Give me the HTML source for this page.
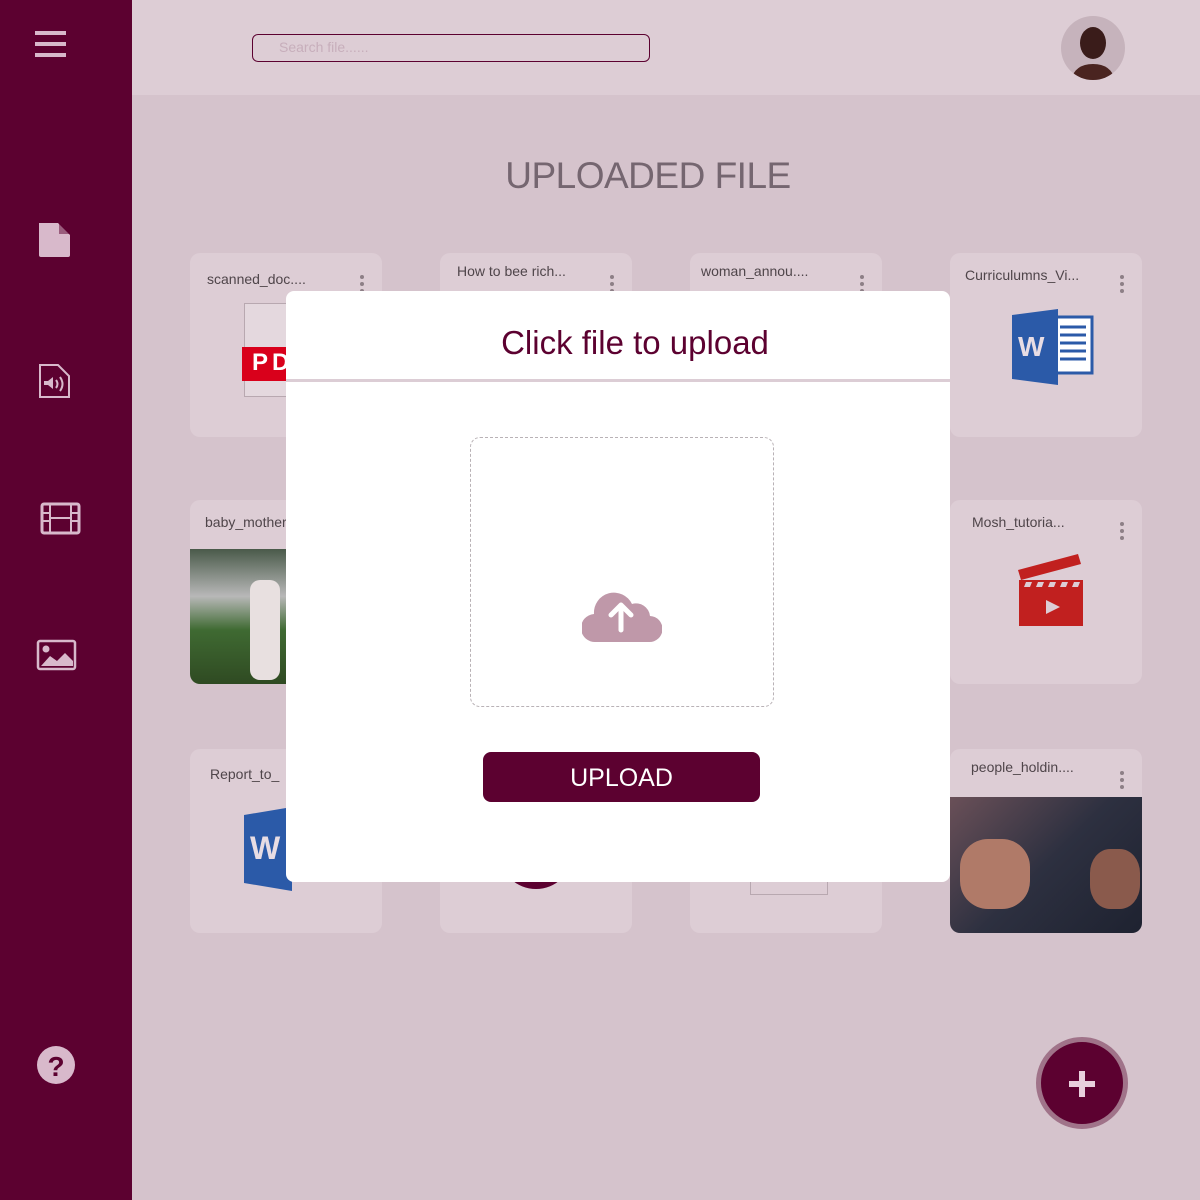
<!DOCTYPE html>
<html><head><meta charset="utf-8"><style>
*{margin:0;padding:0;box-sizing:border-box}
html,body{width:1200px;height:1200px;overflow:hidden}
body{position:relative;background:#d5c3cc;font-family:"Liberation Sans",sans-serif}
.side{position:absolute;left:0;top:0;width:132px;height:1200px;background:#5c0130}
.hdr{position:absolute;left:132px;top:0;width:1068px;height:95px;background:#ddcdd5}
.search{position:absolute;left:252px;top:34px;width:398px;height:28px;border:1.5px solid #5c0130;border-radius:6px;font-size:14px;color:#c7aebb;padding:4px 0 0 26px}
.avatar{position:absolute;left:1061px;top:16px;width:64px;height:64px;border-radius:50%;background:#c6b3bc;overflow:hidden}
h1{position:absolute;left:0;width:1200px;padding-left:96px;top:155px;text-align:center;font-weight:normal;font-size:37px;color:#756670;letter-spacing:-0.5px}
.card{position:absolute;width:192px;height:184px;background:#ddcdd5;border-radius:10px;overflow:hidden}
.card .t{position:absolute;left:17px;top:18px;font-size:14px;color:#4f454a}
.dots{position:absolute;right:18px;top:22px;width:4px}
.dots i{display:block;width:4px;height:4px;border-radius:50%;background:#8d7f86;margin-bottom:3px}
.modal{position:absolute;left:286px;top:291px;width:664px;height:591px;background:#fff;border-radius:8px}
.modal .ttl{position:absolute;top:33px;width:100%;text-align:center;font-size:33px;color:#5c0130;padding-left:34px}
.modal .ln{position:absolute;top:88px;left:0;width:664px;height:3px;background:#dccdd5}
.drop{position:absolute;left:184px;top:146px;width:304px;height:270px;border:1.5px dashed #b9b2b6;border-radius:10px}
.btn{position:absolute;left:197px;top:461px;width:277px;height:50px;background:#5c0130;border-radius:8px;color:#fff;font-size:25px;text-align:center;line-height:52px}
.fab{position:absolute;left:1036px;top:1037px;width:92px;height:92px;border-radius:50%;background:#5c0130;border:5px solid #a07389}
</style></head><body>
<div class="side">
<svg width="132" height="1200" fill="#d8b9cb">
<rect x="35" y="31" width="31" height="4"/><rect x="35" y="42" width="31" height="4"/><rect x="35" y="53" width="31" height="4"/>
<path d="M39 223h19l12 12v20a2 2 0 0 1-2 2H41a2 2 0 0 1-2-2z"/><path d="M59 223v11h11z" fill="#5c0130" opacity=".5"/>
<path d="M40 365h18l11 11v21H40z" fill="none" stroke="#d8b9cb" stroke-width="2"/><path d="M44 381h4l5-4v12l-5-4h-4z"/><path d="M56 380q3 4 0 8M60 377q5 7 0 14" fill="none" stroke="#d8b9cb" stroke-width="2"/>
<rect x="42" y="504" width="37" height="29" rx="2" fill="none" stroke="#d8b9cb" stroke-width="3"/><path d="M50 504v29M71 504v29M42 513h8M42 521h8M71 513h8M71 521h8M50 518h21" stroke="#d8b9cb" stroke-width="2"/>
<rect x="38" y="641" width="37" height="28" rx="2" fill="none" stroke="#d8b9cb" stroke-width="2.5"/><circle cx="46" cy="649" r="3.5"/><path d="M41 666l9-10 7 5 8-8 8 8v5z"/>
<circle cx="56" cy="1065" r="19"/><text x="56" y="1076" text-anchor="middle" font-size="28" font-weight="bold" fill="#5c0130" font-family="Liberation Sans">?</text>
</svg></div>
<div class="hdr"></div>
<div class="search">Search file......</div>
<div class="avatar"><svg width="64" height="64"><ellipse cx="32" cy="27" rx="13" ry="16" fill="#3a1c1a"/><path d="M10 64q4-16 22-16t22 16z" fill="#4a2420"/></svg></div>
<h1>UPLOADED FILE</h1>

<div class="card" style="left:190px;top:253px"><div class="t">scanned_doc....</div><div class="dots"><i></i><i></i><i></i></div>
<div style="position:absolute;left:54px;top:50px;width:90px;height:94px;border:1px solid #b8a8b0;background:#e4d8de"></div>
<div style="position:absolute;left:52px;top:94px;width:100px;height:34px;background:#d9001b;color:#fff;font-weight:bold;font-size:24px;padding:2px 0 0 10px;letter-spacing:4px">PDF</div></div>
<div class="card" style="left:440px;top:253px"><div class="t" style="top:10px">How to bee rich...</div><div class="dots"><i></i><i></i><i></i></div></div>
<div class="card" style="left:690px;top:253px"><div class="t" style="top:10px;left:11px">woman_annou....</div><div class="dots"><i></i><i></i><i></i></div></div>
<div class="card" style="left:950px;top:253px"><div class="t" style="top:14px;left:15px">Curriculumns_Vi...</div><div class="dots"><i></i><i></i><i></i></div>
<svg style="position:absolute;left:62px;top:56px" width="82" height="76"><rect x="40" y="8" width="40" height="56" fill="#fff" stroke="#2b5aa8" stroke-width="3"/><path d="M48 18h26M48 26h26M48 34h26M48 42h26M48 50h26" stroke="#2b5aa8" stroke-width="3"/><path d="M0 6l46-6v76L0 70z" fill="#2b5aa8"/><text x="6" y="47" font-size="28" font-weight="bold" fill="#e8dde4" font-family="Liberation Sans">W</text></svg></div>

<div class="card" style="left:190px;top:500px"><div class="t" style="left:15px;top:14px">baby_mother</div>
<div style="position:absolute;left:0;top:49px;width:192px;height:135px;background:linear-gradient(180deg,#4a5a4a 0%,#b8b8b8 35%,#3f6a32 60%,#2f4a22 100%)"></div>
<div style="position:absolute;left:60px;top:80px;width:30px;height:100px;background:#e8e0e0;border-radius:10px"></div></div>
<div class="card" style="left:950px;top:500px"><div class="t" style="left:22px;top:14px">Mosh_tutoria...</div><div class="dots"><i></i><i></i><i></i></div>
<svg style="position:absolute;left:66px;top:54px" width="70" height="74"><path d="M2 16l60-16 3 10-60 16z" fill="#c1201f"/><rect x="3" y="26" width="64" height="46" fill="#c1201f"/><path d="M10 28h6l-2 5h-6zM22 28h6l-2 5h-6zM34 28h6l-2 5h-6zM46 28h6l-2 5h-6zM58 28h6l-2 5h-6z" fill="#ddcdd5"/><path d="M30 46l14 7-14 7z" fill="#ddcdd5"/></svg></div>

<div class="card" style="left:190px;top:749px"><div class="t" style="left:20px;top:17px">Report_to_</div>
<svg style="position:absolute;left:54px;top:58px" width="60" height="84"><path d="M0 8l48-8v84L0 76z" fill="#2b5aa8"/><text x="6" y="52" font-size="32" font-weight="bold" fill="#e8dde4" font-family="Liberation Sans">W</text></svg></div>
<div class="card" style="left:440px;top:749px"><div style="position:absolute;left:60px;top:70px;width:72px;height:70px;border-radius:50%;background:#5c0130"></div></div>
<div class="card" style="left:690px;top:749px"><div style="position:absolute;left:60px;top:110px;width:78px;height:36px;border:1px solid #b8a8b0"></div></div>
<div class="card" style="left:950px;top:749px"><div class="t" style="left:21px;top:10px">people_holdin....</div><div class="dots" style="top:22px"><i></i><i></i><i></i></div>
<div style="position:absolute;left:0;top:48px;width:192px;height:136px;background:linear-gradient(135deg,#6a5058,#2d3040 50%,#1e2230)"></div>
<div style="position:absolute;left:10px;top:90px;width:70px;height:70px;border-radius:40%;background:#b07a68"></div>
<div style="position:absolute;left:140px;top:100px;width:50px;height:60px;border-radius:40%;background:#8a5a4c"></div></div>

<div class="modal"><div class="ttl">Click file to upload</div><div class="ln"></div>
<div class="drop"><svg style="position:absolute;left:111px;top:148px" width="80" height="58"><path d="M14 56a14 14 0 0 1-2-28 20 20 0 0 1 38-10 14 14 0 0 1 18 12 13 13 0 0 1 -1 26z" fill="#bf98a9"/><path d="M39 44V20M29 29l10-10 10 10" fill="none" stroke="#fff" stroke-width="5" stroke-linecap="round" stroke-linejoin="round"/></svg></div>
<div class="btn">UPLOAD</div></div>

<div class="fab"><svg width="82" height="82"><path d="M41 29v26M28 42h26" stroke="#e8d0dc" stroke-width="6"/></svg></div>
</body></html>
